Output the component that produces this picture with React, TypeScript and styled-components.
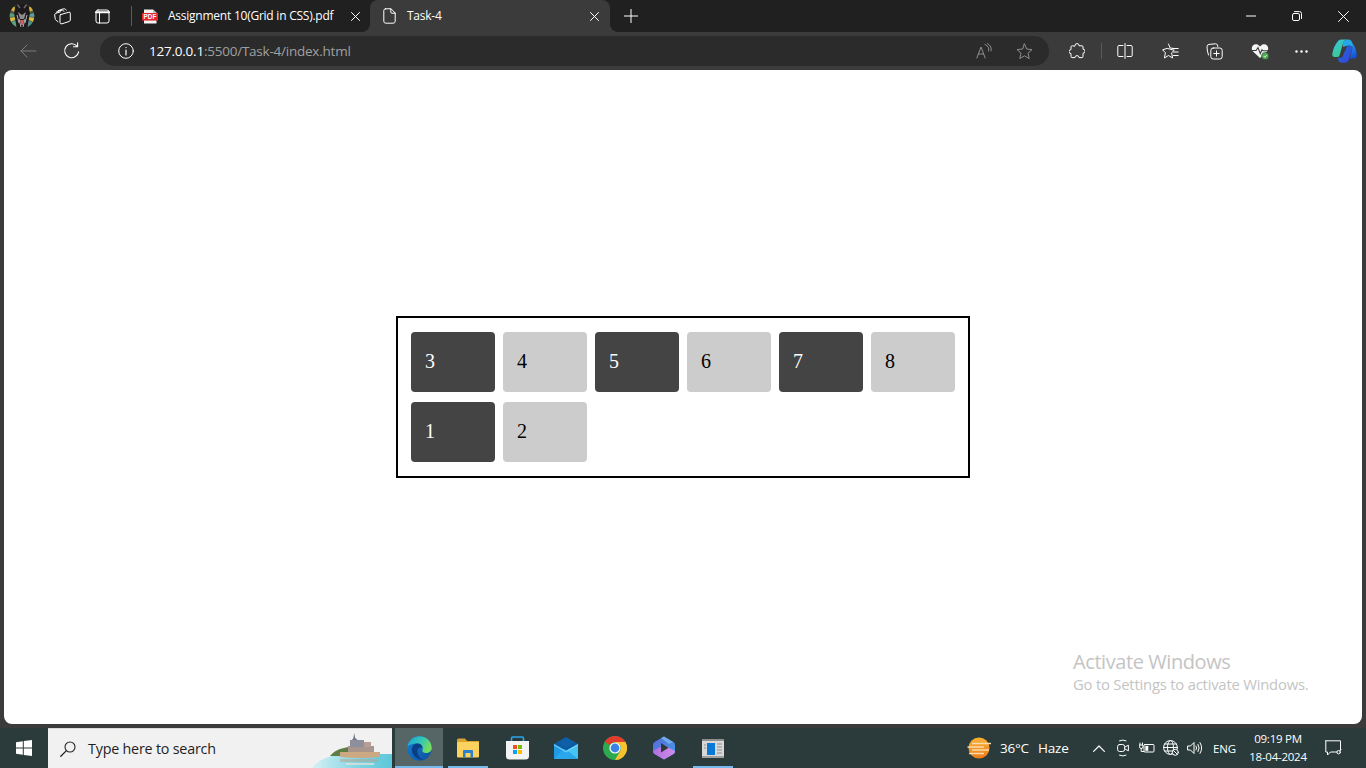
import React from "react";
import styled, { createGlobalStyle } from "styled-components";

const UI = `"Open Sans", "Noto Sans", "Liberation Sans", sans-serif`;

const Global = createGlobalStyle`
  html, body { margin: 0; padding: 0; width: 100%; height: 100%; overflow: hidden; }
  #root { height: 100%; }
  svg { display: block; }
`;

const Shell = styled.div`
  display: flex; flex-direction: column; height: 768px; width: 1366px;
  background: #3b3b3b; font-family: ${UI};
`;
const TitleBar = styled.header`
  display: flex; align-items: stretch; height: 32px; flex: none; background: #202020; color: #fff;
`;
const Slot = styled.div<{ $w: number; $ml?: number }>`
  display: flex; align-items: center; justify-content: center; flex: none;
  width: ${p => p.$w}px; margin-left: ${p => p.$ml ?? 0}px;
`;
const Sep = styled.div<{ $h: number; $ml: number; $mr?: number }>`
  flex: none; align-self: center; width: 1px; height: ${p => p.$h}px; background: #5a5a5a;
  margin-left: ${p => p.$ml}px; margin-right: ${p => p.$mr ?? 0}px;
`;
const Tab = styled.div<{ $active?: boolean; $w: number }>`
  position: relative; display: flex; align-items: center; flex: none; width: ${p => p.$w}px;
  box-sizing: border-box;
  background: ${p => (p.$active ? "#3b3b3b" : "transparent")};
  border-radius: 8px 8px 0 0;
  ${p => p.$active && `
    &::before, &::after { content: ""; position: absolute; bottom: 0; width: 8px; height: 8px; }
    &::before { left: -8px; background: radial-gradient(circle at 0 0, #202020 7.6px, #3b3b3b 8.2px); }
    &::after { right: -8px; background: radial-gradient(circle at 100% 0, #202020 7.6px, #3b3b3b 8.2px); }
  `}
`;
const TabIcon = styled.div<{ $ml: number; $w: number }>`
  flex: none; display: flex; justify-content: center; margin-left: ${p => p.$ml}px; width: ${p => p.$w}px;
`;
const TabLabel = styled.span<{ $ml: number }>`
  flex: 1; margin-left: ${p => p.$ml}px; font-size: 12px; line-height: 16px; white-space: nowrap;
  color: #fff; letter-spacing: -0.24px;
`;
const TabClose = styled.div<{ $mr: number }>`
  flex: none; display: flex; justify-content: center; width: 12px; margin-right: ${p => p.$mr}px;
`;
const Spacer = styled.div` flex: 1; `;

const Toolbar = styled.div`
  display: flex; align-items: center; height: 38px; flex: none; padding-left: 8px; box-sizing: border-box;
  background: #3b3b3b;
`;
const Pill = styled.div`
  display: flex; align-items: center; width: 949px; height: 30px; margin-left: 4px; flex: none;
  border-radius: 15px; background: #2b2b2b;
`;
const Url = styled.div`
  flex: 1; font-size: 13.5px; line-height: 18px; color: #a0a0a0; margin-left: 15px; letter-spacing: -0.23px;
  white-space: nowrap;
`;
const Host = styled.span` color: #fff; `;

const Viewport = styled.main`
  position: relative; flex: none; display: flex; align-items: center; justify-content: center;
  height: 654px; width: 1358px; margin-left: 4px; background: #fff; border-radius: 8px;
`;
const Grid = styled.section`
  display: grid; grid-template-columns: repeat(6, 84px); grid-auto-rows: 60px; gap: 10px 8px;
  padding: 14px 13px; border: 2px solid #000;
`;
const Cell = styled.div<{ $dark?: boolean }>`
  display: flex; align-items: center; padding: 0 0 2px 14px; border-radius: 4px;
  font-family: "Liberation Serif", "Times New Roman", serif; font-size: 20px;
  background: ${p => (p.$dark ? "#444444" : "#cccccc")};
  color: ${p => (p.$dark ? "#ffffff" : "#000000")};
`;
const Watermark = styled.div`
  position: absolute; left: 1069px; top: 580px; color: #c4c4c4; white-space: nowrap;
`;
const WmTitle = styled.div` font-size: 20px; line-height: 24px; letter-spacing: -0.42px; `;
const WmSub = styled.div` font-size: 14.8px; line-height: 20px; letter-spacing: -0.2px; `;

const Taskbar = styled.footer`
  display: flex; align-items: stretch; height: 40px; margin-top: 4px; flex: none; background: #2b3a3a; color: #fff;
`;
const Search = styled.div`
  display: flex; align-items: center; width: 344px; flex: none; background: #f1f1f1; box-sizing: border-box;
  padding-left: 12px; overflow: hidden; border-top: 1px solid #d8d8d8;
`;
const SearchText = styled.span`
  flex: 1; margin-left: 12px; font-size: 14.3px; color: #1f1f1f; letter-spacing: -0.2px; white-space: nowrap;
`;
const Apps = styled.div`
  display: flex; gap: 1px; margin-left: 3px; flex: none;
`;
const AppSlot = styled.div<{ $on?: boolean; $bar?: boolean }>`
  position: relative; display: flex; align-items: center; justify-content: center; width: 48px;
  background: ${p => (p.$on ? "#566666" : "transparent")};
  ${p => p.$bar && `
    &::after { content: ""; position: absolute; bottom: 0; height: 2px; background: #76b9ed;
      left: ${p.$on ? 0 : 4}px; right: ${p.$on ? 0 : 4}px; }
  `}
`;
const Tray = styled.div`
  display: flex; align-items: center; margin-left: auto; padding-right: 14px; flex: none;
`;
const TrayText = styled.div<{ $w: number; $size?: number; $center?: boolean; $ml?: number }>`
  flex: none; width: ${p => p.$w}px; font-size: ${p => p.$size ?? 13.5}px; white-space: nowrap; color: #fff;
  margin-left: ${p => p.$ml ?? 0}px;
  letter-spacing: -0.2px; text-align: ${p => (p.$center ? "center" : "left")};
`;
const Clock = styled.div`
  flex: none; width: 72px; text-align: center; font-size: 11.5px; line-height: 18px; letter-spacing: -0.25px; color: #fff;
`;

const s = { fill: "none", stroke: "#fff", strokeWidth: 1, strokeLinecap: "round", strokeLinejoin: "round" } as const;
const Ico = ({ w, h = w, children, st }: { w: number; h?: number; children: React.ReactNode; st?: string }) => (
  <svg width={w} height={h} viewBox={`0 0 ${w} ${h}`} {...s} stroke={st ?? "#fff"}>{children}</svg>
);

const Avatar = () => (
  <svg width="26" height="26" viewBox="0 0 26 26">
    <defs><clipPath id="av"><circle cx="13" cy="13" r="12.3" /></clipPath></defs>
    <g clipPath="url(#av)">
      <rect width="26" height="26" fill="#4b5a48" />
      <path d="M0 6 L13 13 L2 0Z" fill="#d9b23a" />
      <path d="M0 10 L13 13 L0 14Z" fill="#58a07f" />
      <path d="M0 15 L13 13 L0 20Z" fill="#e0bb3d" />
      <path d="M0 21 L13 13 L5 26Z" fill="#5aa27e" />
      <path d="M26 6 L13 13 L24 0Z" fill="#d9b23a" />
      <path d="M26 10 L13 13 L26 14Z" fill="#5d9fa6" />
      <path d="M26 15 L13 13 L26 20Z" fill="#e0bb3d" />
      <path d="M26 21 L13 13 L21 26Z" fill="#4f8f8a" />
      <path d="M7 0 H19 L21 10 L18 26 H8 L5 10Z" fill="#1d1a1c" />
      <path d="M9 9 L13 12 L17 9 L15 16 H11Z" fill="#8f8a90" />
      <path d="M10 16 L12 24 M16 16 L14 24 M8 12 L10 20 M18 12 L16 20" stroke="#b9b4b6" strokeWidth="1" />
      <path d="M11 17 H15 L14 22 H12Z" fill="#c9606a" />
      <path d="M8 1 L11 5 M18 1 L15 5" stroke="#6d6a6c" strokeWidth="1.4" />
    </g>
  </svg>
);
const Workspaces = () => (
  <Ico w={17}>
    <path d="M4.2 2.6 Q9 0.6 10.5 0.8 Q11.6 1 12.4 2.2" />
    <path d="M2.3 4.2 Q7 2 8.5 2.2 Q9.4 2.3 10 3.4" />
    <path d="M4 13.6 L2.2 12.4 Q1.4 11.8 1.2 10.8 L0.7 6.8 Q0.6 5.8 1.6 5.4 L6.5 3.8" />
    <path d="M6.6 6.6 L15 4.2 Q16.3 4 16.3 5.2 V12 Q16.3 13 15.4 13.4 L8 15.8 Q6 16.2 6 14.6 V7.4 Q6 6.8 6.6 6.6Z" />
  </Ico>
);
const VerticalTabs = () => (
  <Ico w={15}>
    <rect x="1" y="1" width="13" height="13" rx="2" />
    <path d="M1 3.2 H14" strokeWidth="2" />
    <path d="M4.5 3 V14" />
  </Ico>
);
const PdfIcon = () => (
  <svg width="16" height="15" viewBox="0 0 16 15">
    <path d="M2 0.5 H11 L14.5 3.8 V14.5 H2Z" fill="#f4f4f4" />
    <path d="M11 0.5 L14.5 3.8 H11Z" fill="#b8b8b8" />
    <rect x="0" y="4" width="16" height="7.6" fill="#e5252a" />
    <text x="8" y="10.2" textAnchor="middle" fontFamily="Liberation Sans, sans-serif" fontSize="6.4" fontWeight="700" fill="#fff">PDF</text>
  </svg>
);
const DocIcon = () => (
  <Ico w={13} h={16}>
    <path d="M2.5 0.8 H8 L12.2 5 V13.2 Q12.2 15.2 10.2 15.2 H2.8 Q0.8 15.2 0.8 13.2 V2.5 Q0.8 0.8 2.5 0.8Z" />
    <path d="M7.8 0.8 V4 Q7.8 5.2 9 5.2 H12.2" />
  </Ico>
);
const XIcon = ({ n = 9 }: { n?: number }) => (
  <Ico w={n}><path d={`M0.5 0.5 L${n - 0.5} ${n - 0.5} M${n - 0.5} 0.5 L0.5 ${n - 0.5}`} /></Ico>
);
const Plus = () => (
  <svg width="14" height="14" viewBox="0 0 14 14"><path d="M7 0 V14 M0 7 H14" stroke="#fff" strokeWidth="1" /></svg>
);
const Minimize = () => <svg width="10" height="2" viewBox="0 0 10 2"><path d="M0 1 H10" stroke="#fff" /></svg>;
const Restore = () => (
  <Ico w={10}>
    <rect x="0.5" y="2.5" width="7" height="7" rx="1.4" />
    <path d="M2.5 0.6 H7.6 Q9.5 0.6 9.5 2.5 V7.5" />
  </Ico>
);
const Back = () => (
  <Ico w={17} h={14} st="#7c7c7c"><path d="M16 7 H1 M7 1 L1 7 L7 13" /></Ico>
);
const Refresh = () => (
  <Ico w={18}>
    <path d="M15.6 9.8 A7 7 0 1 1 14 4.2" strokeWidth="1.1" />
    <path d="M14.6 0.8 V4.8 H10.6" strokeWidth="1.1" />
  </Ico>
);
const Info = () => (
  <Ico w={16}>
    <circle cx="8" cy="8" r="7.3" />
    <path d="M8 7 V12" strokeWidth="1.2" />
    <circle cx="8" cy="4.6" r="0.7" fill="#fff" stroke="none" />
  </Ico>
);
const ReadAloud = () => (
  <Ico w={16} h={16} st="#8f8f8f">
    <path d="M0.8 15 L5 4 L9.2 15 M2.4 11 H7.6" />
    <path d="M9 1.5 Q14 3.5 12.5 8 M11.5 0.6 Q16.5 3.5 15 8" />
  </Ico>
);
const StarPath = "M8.5 1 L10.7 6 L16 6.6 L12 10.2 L13.2 15.6 L8.5 12.8 L3.8 15.6 L5 10.2 L1 6.6 L6.3 6Z";
const Star = () => <Ico w={17} st="#8f8f8f"><path d={StarPath} /></Ico>;
const Puzzle = () => (
  <Ico w={16}>
    <path d="M6 2.8 V2.6 A2 2 0 0 1 10 2.6 V2.8 H13 Q14 2.8 14 3.8 V6.2 A2 2 0 0 1 14 10.2 V13.4 Q14 14.6 13 14.6 H10 A2 2 0 0 0 6 14.6 H3 Q2 14.6 2 13.4 V10.6 A2 2 0 0 1 2 6.6 V3.8 Q2 2.8 3 2.8Z" />
  </Ico>
);
const Split = () => (
  <Ico w={16}>
    <path d="M6 2.5 H2 Q0.8 2.5 0.8 3.7 V12.3 Q0.8 13.5 2 13.5 H6" />
    <path d="M10 2.5 H14 Q15.2 2.5 15.2 3.7 V12.3 Q15.2 13.5 14 13.5 H10" />
    <path d="M8 0.5 V15.5" />
  </Ico>
);
const Favs = () => (
  <Ico w={17}>
    <path d="M6.5 1 L8.2 5 L12 5.5 M12 7.5 L9.6 9.8 L10.6 15 L6.5 12.5 L2.4 15 L3.4 9.8 L0.6 6.8 L4.8 5.5Z" />
    <path d="M11 5.5 H16.2 M11.5 9 H16.2 M11.5 12.5 H16.2" />
  </Ico>
);
const Collections = () => (
  <Ico w={17}>
    <path d="M2.5 12 Q1 8 1 3.8 Q1 1.6 3 1.4 L9.5 0.8 Q11 0.8 11.5 2 L11.8 3.5" />
    <rect x="4.8" y="5" width="11.4" height="11" rx="2.4" />
    <path d="M10.5 7.8 V13.2 M7.8 10.5 H13.2" />
  </Ico>
);
const Health = () => (
  <svg width="18" height="17" viewBox="0 0 18 17">
    <path d="M9 15 L2 8.5 C-1 5 2 0.5 5.5 1.2 C7.2 1.5 8.4 2.6 9 3.6 C9.6 2.6 10.8 1.5 12.5 1.2 C16 0.5 19 5 16 8.5Z" fill="#f4f4f4" />
    <path d="M0 7.5 H5 L7 4.6 L9.3 10.5 L11 6.8 L12 7.8 H18" fill="none" stroke="#3b3b3b" strokeWidth="1.1" />
    <circle cx="14.2" cy="13" r="3.6" fill="#4caf50" stroke="#3b3b3b" strokeWidth="0.6" />
    <path d="M12.7 13 L13.8 14.2 L15.8 12" fill="none" stroke="#fff" strokeWidth="0.8" />
  </svg>
);
const More = () => (
  <svg width="13" height="3" viewBox="0 0 13 3" fill="#fff">
    <circle cx="1.5" cy="1.5" r="1.2" /><circle cx="6.5" cy="1.5" r="1.2" /><circle cx="11.5" cy="1.5" r="1.2" />
  </svg>
);
const CopilotLogo = () => (
  <svg width="25" height="24" viewBox="0 0 25 24">
    <defs>
      <linearGradient id="c1" x1="0" y1="0" x2="0.6" y2="1"><stop offset="0" stopColor="#35c4e8" /><stop offset="1" stopColor="#3ec98a" /></linearGradient>
      <linearGradient id="c2" x1="0" y1="0" x2="0.3" y2="1"><stop offset="0" stopColor="#2aa0ee" /><stop offset="1" stopColor="#1550d8" /></linearGradient>
      <linearGradient id="c3" x1="0" y1="0" x2="1" y2="1"><stop offset="0" stopColor="#1a6fe0" /><stop offset="1" stopColor="#3a3fd8" /></linearGradient>
    </defs>
    <path d="M6.5 1.5 Q7.5 0.5 10 0.5 H15 Q12 1 11 4.5 L7.5 16.5 Q7 18 5 18 H3 Q0 18 0.3 15 Q1.5 7 6.5 1.5Z" fill="url(#c1)" />
    <path d="M11 4.5 Q12 1 15 0.5 H17 Q19 0.5 20 3 L21.5 8 L16 6.5 L11 8Z" fill="#24a8e8" />
    <path d="M20 4 Q24.5 8 24.8 17 Q24.8 19.5 21.5 19.5 H18 L20.5 9Z" fill="url(#c2)" />
    <path d="M9.5 23.8 Q7.5 23.8 6.5 21.5 L6 19 L10 18.5 L14 10 Q15 6.5 18 6 L20.5 9 L17 20 Q16 23.8 13 23.8Z" fill="url(#c3)" />
  </svg>
);
const WinLogo = () => (
  <svg width="16" height="16" viewBox="0 0 16 16" fill="#fff">
    <path d="M0 2.3 L6.8 1.3 V7.5 H0Z M7.8 1.1 L16 0 V7.5 H7.8Z M0 8.5 H6.8 V14.7 L0 13.7Z M7.8 8.5 H16 V16 L7.8 14.9Z" />
  </svg>
);
const SearchIcon = () => (
  <svg width="16" height="16" viewBox="0 0 16 16" fill="none" stroke="#222" strokeWidth="1.1">
    <circle cx="10" cy="6" r="5" /><path d="M6.4 9.6 L0.8 15.3" strokeLinecap="round" strokeWidth="1.3" />
  </svg>
);
const Island = () => (
  <svg width="80" height="39" viewBox="0 0 80 39">
    <defs><linearGradient id="wtr" x1="0" y1="0" x2="1" y2="0"><stop offset="0" stopColor="#d6f1f4" /><stop offset="0.6" stopColor="#7ed3e2" /><stop offset="1" stopColor="#5cc7da" /></linearGradient></defs>
    <path d="M0 39 Q8 28 30 25 H80 V39Z" fill="url(#wtr)" />
    <path d="M18 27 Q22 22 28 20 L36 18 L38 27Z" fill="#5d7d45" />
    <path d="M28 23 H68 V28 Q48 30 28 28Z" fill="#cda983" />
    <rect x="36" y="17" width="26" height="6" fill="#a8958c" />
    <rect x="38" y="11" width="14" height="7" fill="#8e8f9c" />
    <path d="M42.2 4 L43.2 9 L45.5 11 H40 L41.4 9Z" fill="#6f7486" />
    <rect x="52" y="13" width="7" height="5" fill="#b6a095" />
    <path d="M28 30 H66 V33 H28Z" fill="#b99f88" opacity="0.5" />
    <path d="M34 34 H62 V36 H34Z" fill="#e7e1d8" opacity="0.7" />
  </svg>
);
const EdgeIcon = () => (
  <svg width="25" height="25" viewBox="0 0 25 25">
    <defs>
      <linearGradient id="e1" x1="0" y1="0" x2="1" y2="1"><stop offset="0" stopColor="#1a7fd4" /><stop offset="1" stopColor="#0b4f9c" /></linearGradient>
      <linearGradient id="e2" x1="0" y1="0" x2="1" y2="0.4"><stop offset="0" stopColor="#16a0e0" /><stop offset="0.6" stopColor="#35c8b0" /><stop offset="1" stopColor="#72dc62" /></linearGradient>
    </defs>
    <circle cx="12.5" cy="12.5" r="12.2" fill="url(#e1)" />
    <path d="M0.4 11 C1.5 4 7 0.3 12.5 0.3 C19.5 0.3 24.8 6 24.8 12 C24.8 15.5 22 17 19 17 C16 17 14.8 15.5 15.5 14 C16.8 11 14.5 7.5 10.5 7.5 C5.5 7.5 1.5 9 0.4 11Z" fill="url(#e2)" />
    <path d="M10.5 7.5 C6 7.5 4.2 12 5 15.5 C6 20 11 24 16.5 24 C12 21.5 10 18.5 10.5 14.5 C10.8 12 12.5 11 15.5 11.5 C14.8 9 13 7.5 10.5 7.5Z" fill="#0a3f86" />
  </svg>
);
const FolderIcon = () => (
  <svg width="22" height="20" viewBox="0 0 22 20">
    <path d="M0 2 Q0 0.5 1.5 0.5 H8 L10 3 H22 V5H0Z" fill="#d9a52e" />
    <rect y="4" width="22" height="15.5" rx="1" fill="#fbd25e" />
    <path d="M6 19.5 V13 Q6 12 7 12 H15 Q16 12 16 13 V19.5 H13.5 V15 H8.5 V19.5Z" fill="#2a7fd0" />
  </svg>
);
const StoreIcon = () => (
  <svg width="23" height="24" viewBox="0 0 23 24">
    <path d="M5.5 5 V2.5 Q5.5 1 7 1 H16 Q17.5 1 17.5 2.5 V5" fill="none" stroke="#2aa8ee" strokeWidth="1.6" />
    <path d="M0 5 H23 V20 Q23 23.5 19.5 23.5 H3.5 Q0 23.5 0 20Z" fill="#f3f3f3" />
    <rect x="7" y="9" width="4" height="4" fill="#f25022" /><rect x="12" y="9" width="4" height="4" fill="#7fba00" />
    <rect x="7" y="14" width="4" height="4" fill="#00a4ef" /><rect x="12" y="14" width="4" height="4" fill="#ffb900" />
  </svg>
);
const MailIcon = () => (
  <svg width="24" height="22" viewBox="0 0 24 22">
    <path d="M0 7 L12 0 L24 7 L12 14Z" fill="#0f5fa8" />
    <rect y="7" width="24" height="15" fill="#1e9be6" />
    <path d="M24 7 V22 L12 13Z" fill="#45c3f2" />
    <path d="M0 7 L12 13.5 L24 7 L12 3Z" fill="#0c5aa0" />
    <path d="M3 5.5 L12 0.8 L21 5.5 L12 10.5Z" fill="#0f5fa8" />
    <path d="M0 22 L10 12 L24 22Z" fill="#2aa7ea" />
    <path d="M0 7 L12 14 L24 7 V8.5 L12 15.5 L0 8.5Z" fill="#7fd6f7" opacity="0.8" />
  </svg>
);
const ChromeIcon = () => (
  <svg width="24" height="24" viewBox="0 0 24 24">
    <circle cx="12" cy="12" r="12" fill="#2da94f" />
    <path d="M12 0 A12 12 0 0 1 22.4 6 H12 A6 6 0 0 0 6.8 9 L1.6 6 A12 12 0 0 1 12 0Z" fill="#e33b2e" />
    <path d="M22.4 6 A12 12 0 0 1 12 24 L17.2 15 A6 6 0 0 0 17.2 9 L12 6Z" fill="#fbc02d" />
    <circle cx="12" cy="12" r="5.6" fill="#fff" />
    <circle cx="12" cy="12" r="4.4" fill="#3b82e6" />
  </svg>
);
const HexCopilot = () => (
  <svg width="22" height="24" viewBox="0 0 22 24">
    <defs>
      <linearGradient id="h1" x1="0" y1="0" x2="1" y2="1"><stop offset="0" stopColor="#5a67d8" /><stop offset="1" stopColor="#3fa0e8" /></linearGradient>
      <linearGradient id="h2" x1="0" y1="0" x2="1" y2="0"><stop offset="0" stopColor="#b06fe0" /><stop offset="1" stopColor="#d08ce8" /></linearGradient>
    </defs>
    <path d="M11 0.5 L20.5 6 Q22 7 22 8.5 V15.5 Q22 17 20.5 18 L11 23.5 L1.5 18 Q0 17 0 15.5 V8.5 Q0 7 1.5 6Z" fill="url(#h1)" />
    <path d="M0 15 L11 9 L22 15 Q22 17 20.5 18 L11 23.5 L1.5 18 Q0 17 0 15Z" fill="url(#h2)" />
    <path d="M8 7 L15.5 11.8 L8 16.5Z" fill="#2b3a3a" />
    <path d="M8 2 L11 0.5 L20 6 L16 8Z" fill="#7ec0ee" opacity="0.7" />
  </svg>
);
const NewsApp = () => (
  <svg width="22" height="19" viewBox="0 0 22 19">
    <rect width="22" height="19" fill="#d8d8d8" />
    <rect y="0" width="22" height="2" fill="#8e8e8e" />
    <rect x="5" y="4" width="8" height="12" fill="#0a78d7" />
    <path d="M2 6 H4 M2 9 H4 M15 5 H20 M15 8 H20 M15 11 H20 M15 14 H20" stroke="#8e8e8e" strokeWidth="1" />
    <rect x="0" y="17" width="22" height="2" fill="#a0a0a0" />
  </svg>
);
const Sun = () => (
  <svg width="24" height="22" viewBox="0 0 24 22">
    <defs><linearGradient id="sun" x1="0" y1="0" x2="0" y2="1"><stop offset="0" stopColor="#f9b233" /><stop offset="1" stopColor="#ee7c1a" /></linearGradient></defs>
    <circle cx="12" cy="11" r="10.5" fill="url(#sun)" />
    <path d="M5 6.5 H24 M0.5 10 H17 M5 13 H22 M2 16.5 H17" stroke="#f6dcae" strokeWidth="1.5" fill="none" />
  </svg>
);
const Chevron = () => <Ico w={12} h={7}><path d="M0.6 6.4 L6 1 L11.4 6.4" strokeWidth="1.2" /></Ico>;
const Cam = () => (
  <Ico w={12} h={18}>
    <rect x="0.6" y="5.5" width="7" height="7" rx="2" />
    <path d="M8 8 L11.4 6.2 V11.8 L8 10" />
    <path d="M2.5 1.8 Q6 0.2 9 1.8 M2.5 16.2 Q6 17.8 9 16.2" />
  </Ico>
);
const Battery = () => (
  <Ico w={16} h={12}>
    <rect x="5" y="2.5" width="10" height="7.5" rx="0.8" />
    <rect x="6.3" y="3.8" width="3" height="5" fill="#fff" stroke="none" />
    <path d="M1 1 V3 M3.5 1 V3 M0.5 3 H4 V5 Q4 6.5 2.2 6.5 Q0.5 6.5 0.5 5Z M2.2 6.5 V9.5 H5" />
  </Ico>
);
const Globe = () => (
  <Ico w={16}>
    <circle cx="7.5" cy="7.5" r="6.9" />
    <ellipse cx="7.5" cy="7.5" rx="3" ry="6.9" />
    <path d="M0.6 7.5 H14.4 M1.6 4 H13.4 M1.6 11 H9" />
    <circle cx="12.3" cy="12.3" r="3" fill="#2b3a3a" />
    <path d="M10.4 10.4 L14.2 14.2" />
  </Ico>
);
const Volume = () => (
  <Ico w={16} h={14}>
    <path d="M1 5 H3.5 L7 1.5 V12.5 L3.5 9 H1Z" />
    <path d="M9 5 Q10.4 7 9 9 M11 3.4 Q13.4 7 11 10.6 M13 1.6 Q16.4 7 13 12.4" />
  </Ico>
);
const Bubble = () => (
  <Ico w={17} h={16}>
    <path d="M0.8 0.8 H15.5 V10 M12 12 H5.5 L2.5 15 V12 H0.8 V0.8" />
    <circle cx="13.6" cy="12.2" r="1.7" />
    <path d="M15 10.7 L16 9.7" />
  </Ico>
);

const cells: [string, boolean][] = [
  ["3", true], ["4", false], ["5", true], ["6", false], ["7", true], ["8", false], ["1", true], ["2", false],
];

export default function App() {
  return (
    <Shell>
      <Global />
      <TitleBar>
        <Slot $w={26} $ml={9}><Avatar /></Slot>
        <Slot $w={17} $ml={19}><Workspaces /></Slot>
        <Slot $w={15} $ml={24}><VerticalTabs /></Slot>
        <Sep $h={20} $ml={21} />
        <Tab $w={238}>
          <TabIcon $ml={10} $w={16}><PdfIcon /></TabIcon>
          <TabLabel $ml={10}>Assignment 10(Grid in CSS).pdf</TabLabel>
          <TabClose $mr={9}><XIcon /></TabClose>
        </Tab>
        <Tab $active $w={240}>
          <TabIcon $ml={13} $w={13}><DocIcon /></TabIcon>
          <TabLabel $ml={11}>Task-4</TabLabel>
          <TabClose $mr={10}><XIcon /></TabClose>
        </Tab>
        <Slot $w={14} $ml={14}><Plus /></Slot>
        <Spacer />
        <Slot $w={46}><Minimize /></Slot>
        <Slot $w={46}><Restore /></Slot>
        <Slot $w={46}><XIcon n={11} /></Slot>
      </TitleBar>
      <Toolbar>
        <Slot $w={40}><Back /></Slot>
        <Slot $w={48}><Refresh /></Slot>
        <Pill>
          <Slot $w={16} $ml={18}><Info /></Slot>
          <Url><Host>127.0.0.1</Host>:5500/Task-4/index.html</Url>
          <Slot $w={40}><ReadAloud /></Slot>
          <Slot $w={40}><Star /></Slot>
          <Slot $w={5} />
        </Pill>
        <Slot $w={44} $ml={6}><Puzzle /></Slot>
        <Sep $h={16} $ml={2} />
        <Slot $w={46}><Split /></Slot>
        <Slot $w={44}><Favs /></Slot>
        <Slot $w={44}><Collections /></Slot>
        <Slot $w={48}><Health /></Slot>
        <Slot $w={34}><More /></Slot>
        <Slot $w={36} $ml={8}><CopilotLogo /></Slot>
      </Toolbar>
      <Viewport>
        <Grid>
          {cells.map(([n, dark]) => <Cell key={n} $dark={dark}>{n}</Cell>)}
        </Grid>
        <Watermark>
          <WmTitle>Activate Windows</WmTitle>
          <WmSub>Go to Settings to activate Windows.</WmSub>
        </Watermark>
      </Viewport>
      <Taskbar>
        <Slot $w={48}><WinLogo /></Slot>
        <Search>
          <SearchIcon />
          <SearchText>Type here to search</SearchText>
          <Island />
        </Search>
        <Apps>
          <AppSlot $on $bar><EdgeIcon /></AppSlot>
          <AppSlot $bar><FolderIcon /></AppSlot>
          <AppSlot><StoreIcon /></AppSlot>
          <AppSlot><MailIcon /></AppSlot>
          <AppSlot><ChromeIcon /></AppSlot>
          <AppSlot><HexCopilot /></AppSlot>
          <AppSlot $bar><NewsApp /></AppSlot>
        </Apps>
        <Tray>
          <Slot $w={30}><Sun /></Slot>
          <TrayText $w={38} $ml={6}>36°C</TrayText>
          <TrayText $w={49}>Haze</TrayText>
          <Slot $w={24}><Chevron /></Slot>
          <Slot $w={24}><Cam /></Slot>
          <Slot $w={24}><Battery /></Slot>
          <Slot $w={24}><Globe /></Slot>
          <Slot $w={24}><Volume /></Slot>
          <TrayText $w={35} $size={11.5} $center>ENG</TrayText>
          <Clock>09:19 PM<br />18-04-2024</Clock>
          <Slot $w={38}><Bubble /></Slot>
        </Tray>
      </Taskbar>
    </Shell>
  );
}
